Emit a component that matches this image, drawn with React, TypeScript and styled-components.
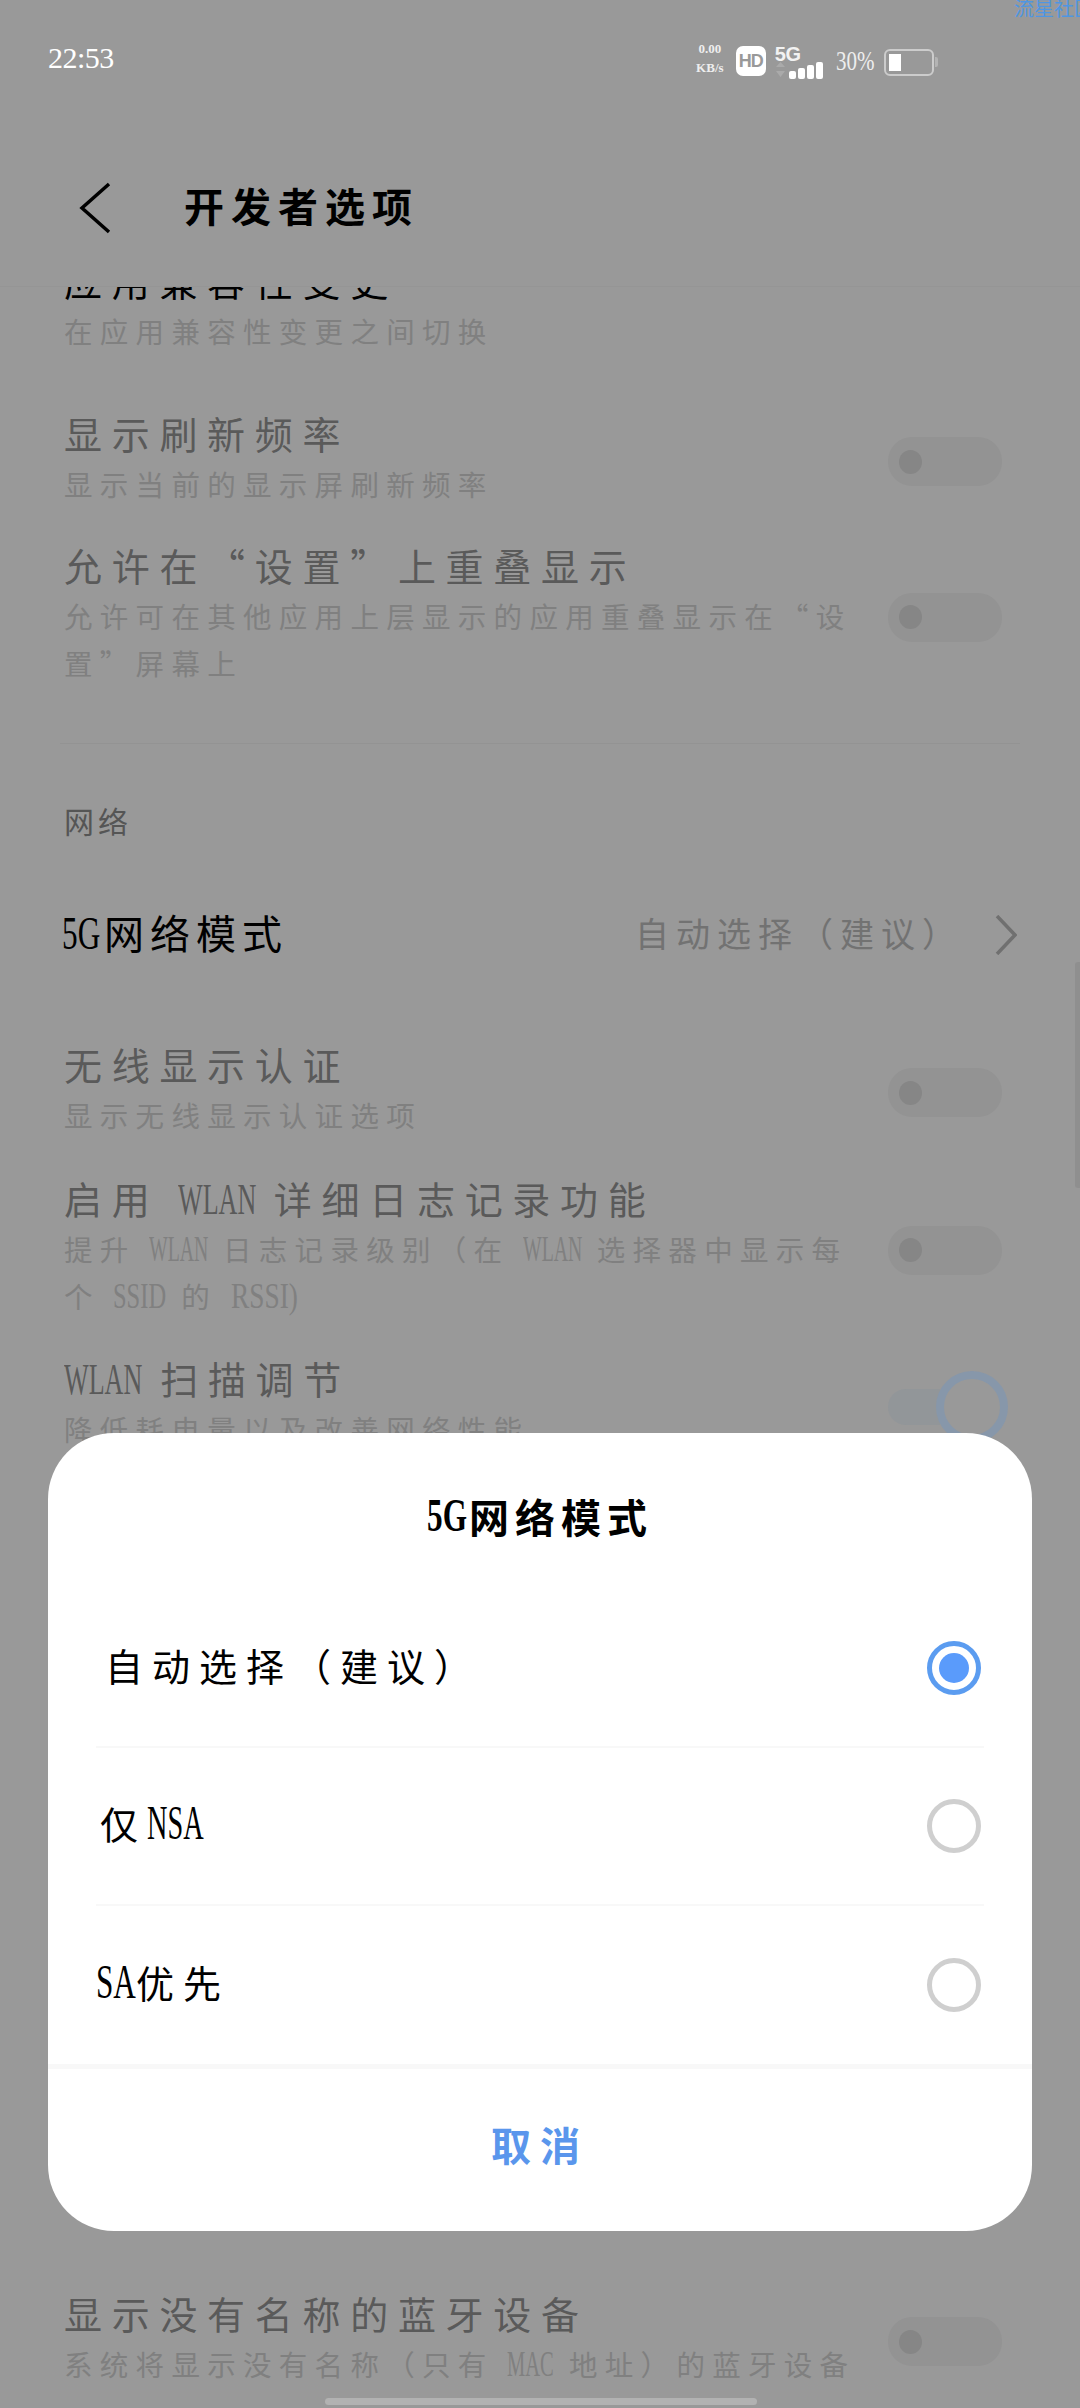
import React from 'react'
import styled, { createGlobalStyle } from 'styled-components'

const cjk = `"Noto Sans CJK SC", sans-serif`
const serif = `"Liberation Serif", "Noto Sans CJK SC", serif`

const Global = createGlobalStyle`
    html, body {
        margin: 0;
        padding: 0;
        background: #999;
    }
    * {
        box-sizing: border-box;
    }
`

const Page = styled.div`
    position: relative;
    width: 1080px;
    height: 2408px;
    overflow: hidden;
    display: flex;
    flex-direction: column;
    background: #999;
    font-family: ${cjk};
`

const Watermark = styled.div`
    position: absolute;
    top: -4px;
    left: 1014px;
    white-space: nowrap;
    font-size: 20px;
    line-height: 24px;
    color: #4f96e2;
`

const StatusBar = styled.div`
    height: 100px;
    padding: 43px 0 0 48px;
    display: flex;
    align-items: flex-start;
    color: #fff;
`

const Time = styled.div`
    font-family: ${serif};
    font-size: 30px;
    line-height: 30px;
    letter-spacing: -0.5px;
    color: #fff;
`

const StatusIcons = styled.div`
    margin-left: 582px;
    display: flex;
    align-items: flex-start;
`

const Speed = styled.div`
    width: 28px;
    margin-top: -2px;
    display: flex;
    flex-direction: column;
    align-items: center;
    gap: 3px;
    font-family: ${serif};
    font-size: 13px;
    line-height: 16px;
    font-weight: bold;
    color: #eee;
`

const HdBadge = styled.div`
    width: 30px;
    height: 30px;
    margin: 3px 0 0 12px;
    border-radius: 7px;
    background: #fff;
    color: #999;
    display: flex;
    align-items: center;
    justify-content: center;
    font-family: "Liberation Sans", sans-serif;
    font-weight: bold;
    font-size: 18px;
    letter-spacing: -1px;
`

const Network = styled.div`
    width: 52px;
    height: 33px;
    margin: 3px 0 0 9px;
    display: flex;
    flex-direction: column;
`

const FiveG = styled.div`
    font-family: "Liberation Sans", sans-serif;
    font-weight: bold;
    font-size: 20px;
    line-height: 16px;
    color: #f2f2f2;
    letter-spacing: -0.5px;
`

const Percent = styled.div`
    width: 40px;
    margin: 4px 0 0 9px;
    font-family: ${serif};
    font-size: 28px;
    line-height: 26px;
    color: #eee;
`

const Battery = styled.div`
    width: 50px;
    height: 27px;
    margin: 6px 0 0 8px;
    padding: 3px;
    border: 2px solid #ccc;
    border-radius: 6px;
    display: flex;
`

const BatteryFill = styled.div`
    width: 12px;
    height: 100%;
    background: #fff;
`

const BatteryNub = styled.div`
    width: 3px;
    height: 10px;
    margin: 14px 0 0 1px;
    background: #b4b4b4;
    border-radius: 0 2px 2px 0;
`

const NavBar = styled.div`
    height: 187px;
    padding: 30px 0 0 78px;
    display: flex;
    align-items: center;
    border-bottom: 1px solid #959595;
`

const NavTitle = styled.div`
    margin-left: 72px;
    padding-bottom: 6px;
    font-weight: bold;
    font-size: 40px;
    letter-spacing: 7px;
    color: #000;
`

const List = styled.div`
    flex: 1;
    overflow: hidden;
`

const Row = styled.div<{ $mt: number }>`
    margin-top: ${p => p.$mt}px;
    padding: 0 78px 0 64px;
    display: flex;
    align-items: center;
    justify-content: space-between;
`

const RowText = styled.div`
    margin: -3px 0 3px;
    display: flex;
    flex-direction: column;
    gap: 4px;
`

const Title = styled.div<{ $dark?: boolean }>`
    height: 46px;
    font-size: 38px;
    line-height: 46px;
    letter-spacing: 9.7px;
    white-space: nowrap;
    color: ${p => p.$dark ? '#000' : '#5a5a5a'};
`

const Sub = styled.div`
    font-size: 28.5px;
    line-height: 47px;
    letter-spacing: 7.3px;
    white-space: nowrap;
    color: #808080;
`

// latin letters in the reference are a tall condensed serif
const Narrow = styled.span<{ $w: number; $sx: number; $size?: number }>`
    display: inline-block;
    width: ${p => p.$w}px;
    font-family: ${serif};
    line-height: 1;
    letter-spacing: 0;
    white-space: nowrap;
    transform: scaleX(${p => p.$sx});
    transform-origin: left center;
    ${p => p.$size ? `font-size: ${p.$size}px;` : ''}
`

const Toggle = styled.div`
    width: 114px;
    height: 49px;
    padding-left: 11px;
    border-radius: 24px;
    background: #939393;
    display: flex;
    align-items: center;
`

const Knob = styled.div`
    width: 23px;
    height: 24px;
    border-radius: 50%;
    background: #868686;
`

const OnSwitch = styled.div`
    width: 120px;
    margin-right: -6px;
    display: flex;
    align-items: center;
`

const OnTrack = styled.div`
    width: 52px;
    height: 36px;
    border-radius: 18px 0 0 18px;
    background: #929699;
`

const OnRing = styled.div`
    width: 72px;
    height: 72px;
    margin-left: -4px;
    border-radius: 50%;
    border: 8px solid #8797aa;
`

const Divider = styled.div`
    height: 1px;
    margin: 54px 60px 0;
    background: #939393;
`

const SectionLabel = styled.div`
    margin-top: 56px;
    padding-left: 64px;
    font-size: 30px;
    line-height: 40px;
    letter-spacing: 4px;
    color: #555;
`

const LinkRow = styled.div`
    height: 60px;
    margin-top: 65px;
    padding: 0 63px 0 62px;
    display: flex;
    align-items: center;
`

const LinkLabel = styled.div`
    flex: 1;
    padding-bottom: 6px;
    font-size: 40px;
    line-height: 60px;
    letter-spacing: 6px;
    white-space: nowrap;
    color: #000;
`

const LinkValue = styled.div`
    padding-bottom: 6px;
    font-size: 34px;
    letter-spacing: 7px;
    color: #727272;
    white-space: nowrap;
`

const LinkChevron = styled.svg`
    margin-left: 32px;
    flex-shrink: 0;
`

const ScrollThumb = styled.div`
    position: absolute;
    top: 962px;
    right: 0;
    width: 5px;
    height: 226px;
    border-radius: 3px 0 0 3px;
    background: #8f8f8f;
`

const Dialog = styled.div`
    position: absolute;
    top: 1433px;
    left: 48px;
    width: 984px;
    height: 798px;
    border-radius: 66px;
    background: #fff;
    display: flex;
    flex-direction: column;
`

const DialogTitle = styled.div`
    height: 157px;
    padding-top: 8px;
    display: flex;
    align-items: center;
    justify-content: center;
    font-weight: bold;
    font-size: 40px;
    letter-spacing: 6px;
    color: #000;
`

const Options = styled.div`
    margin: 0 48px;
`

const Option = styled.div<{ $last?: boolean }>`
    height: 158px;
    padding-right: 3px;
    display: flex;
    align-items: center;
    justify-content: space-between;
    border-bottom: ${p => p.$last ? 'none' : '2px solid #f8f8f8'};
`

const OptionLabel = styled.div<{ $ml: number }>`
    margin-left: ${p => p.$ml}px;
    padding-bottom: 8px;
    font-size: 38px;
    letter-spacing: 9px;
    white-space: nowrap;
    color: #000;
`

const Radio = styled.div<{ $checked?: boolean }>`
    width: 54px;
    height: 54px;
    border-radius: 50%;
    border: 5px solid ${p => p.$checked ? '#5b9cf0' : '#cfcfcf'};
    display: flex;
    align-items: center;
    justify-content: center;
`

const RadioDot = styled.div`
    width: 30px;
    height: 30px;
    border-radius: 50%;
    background: #5a9bfb;
`

const CancelButton = styled.div`
    flex: 1;
    padding-bottom: 12px;
    border-top: 5px solid #f8f8f8;
    display: flex;
    align-items: center;
    justify-content: center;
    font-weight: bold;
    font-size: 40px;
    letter-spacing: 9px;
    color: #5a96ec;
`

const HomeBar = styled.div`
    position: absolute;
    left: 325px;
    top: 2398px;
    width: 432px;
    height: 7px;
    border-radius: 4px;
    background: #b2b2b2;
`

const Off = () => <Toggle><Knob /></Toggle>

const App: React.FC = () => {
    return (
        <Page>
            <Global />
            <Watermark>流星社区</Watermark>
            <StatusBar>
                <Time>22:53</Time>
                <StatusIcons>
                    <Speed>
                        <span>0.00</span>
                        <span>KB/s</span>
                    </Speed>
                    <HdBadge>HD</HdBadge>
                    <Network>
                        <FiveG>5G</FiveG>
                        <svg width="52" height="17" viewBox="0 0 52 17">
                            <path d="M1 5 L5.5 0 L10 5 Z M1 9 L10 9 L5.5 15 Z" fill="#aaa" />
                            <rect x="14" y="9" width="7" height="8" rx="2" fill="#fff" />
                            <rect x="23" y="6" width="7" height="11" rx="2" fill="#fff" />
                            <rect x="32" y="3" width="7" height="14" rx="2" fill="#fff" />
                            <rect x="41" y="0" width="7" height="17" rx="2" fill="#fff" />
                        </svg>
                    </Network>
                    <Percent><Narrow $w={38} $sx={0.75}>30%</Narrow></Percent>
                    <Battery><BatteryFill /></Battery>
                    <BatteryNub />
                </StatusIcons>
            </StatusBar>
            <NavBar>
                <svg width="34" height="54" viewBox="0 0 34 54">
                    <path d="M31 3 L4 27 L31 51" fill="none" stroke="#000" strokeWidth="3.5" />
                </svg>
                <NavTitle>开发者选项</NavTitle>
            </NavBar>
            <List>
                {/* list is scrolled, so the first row sits under the header */}
                <Row $mt={-27}>
                    <RowText>
                        <Title $dark>应用兼容性变更</Title>
                        <Sub>在应用兼容性变更之间切换</Sub>
                    </RowText>
                </Row>
                <Row $mt={56}>
                    <RowText>
                        <Title>显示刷新频率</Title>
                        <Sub>显示当前的显示屏刷新频率</Sub>
                    </RowText>
                    <Off />
                </Row>
                <Row $mt={35}>
                    <RowText>
                        <Title>允许在“设置”上重叠显示</Title>
                        <Sub>允许可在其他应用上层显示的应用重叠显示在“设<br />置”屏幕上</Sub>
                    </RowText>
                    <Off />
                </Row>
                <Divider />
                <SectionLabel>网络</SectionLabel>
                <LinkRow>
                    <LinkLabel><Narrow $w={42} $sx={0.68} $size={46}>5G</Narrow>网络模式</LinkLabel>
                    <LinkValue>自动选择（建议）</LinkValue>
                    <LinkChevron width="22" height="40" viewBox="0 0 22 40">
                        <path d="M2 1 L20 20 L2 39" fill="none" stroke="#707070" strokeWidth="3.5" />
                    </LinkChevron>
                </LinkRow>
                <Row $mt={79}>
                    <RowText>
                        <Title>无线显示认证</Title>
                        <Sub>显示无线显示认证选项</Sub>
                    </RowText>
                    <Off />
                </Row>
                <Row $mt={37}>
                    <RowText>
                        <Title>启用 <Narrow $w={78} $sx={0.58} $size={45}>WLAN</Narrow> 详细日志记录功能</Title>
                        <Sub>提升 <Narrow $w={60} $sx={0.55} $size={36}>WLAN</Narrow> 日志记录级别（在 <Narrow $w={60} $sx={0.55} $size={36}>WLAN</Narrow> 选择器中显示每<br />个 <Narrow $w={54} $sx={0.68} $size={36}>SSID</Narrow> 的 <Narrow $w={68} $sx={0.76} $size={36}>RSSI)</Narrow></Sub>
                    </RowText>
                    <Off />
                </Row>
                <Row $mt={36}>
                    <RowText>
                        <Title><Narrow $w={78} $sx={0.58} $size={45}>WLAN</Narrow> 扫描调节</Title>
                        <Sub>降低耗电量以及改善网络性能</Sub>
                    </RowText>
                    <OnSwitch>
                        <OnTrack />
                        <OnRing />
                    </OnSwitch>
                </Row>
                <Row $mt={838}>
                    <RowText>
                        <Title>显示没有名称的蓝牙设备</Title>
                        <Sub>系统将显示没有名称（只有 <Narrow $w={48} $sx={0.57} $size={36}>MAC</Narrow> 地址）的蓝牙设备</Sub>
                    </RowText>
                    <Off />
                </Row>
            </List>
            <ScrollThumb />
            <Dialog>
                <DialogTitle><Narrow $w={42} $sx={0.68} $size={46}>5G</Narrow>网络模式</DialogTitle>
                <Options>
                    <Option>
                        <OptionLabel $ml={9}>自动选择（建议）</OptionLabel>
                        <Radio $checked><RadioDot /></Radio>
                    </Option>
                    <Option>
                        <OptionLabel $ml={4}>仅<Narrow $w={57} $sx={0.59} $size={48}>NSA</Narrow></OptionLabel>
                        <Radio />
                    </Option>
                    <Option $last>
                        <OptionLabel $ml={0}><Narrow $w={40} $sx={0.65} $size={48}>SA</Narrow>优先</OptionLabel>
                        <Radio />
                    </Option>
                </Options>
                <CancelButton>取消</CancelButton>
            </Dialog>
            <HomeBar />
        </Page>
    )
}

export default App
